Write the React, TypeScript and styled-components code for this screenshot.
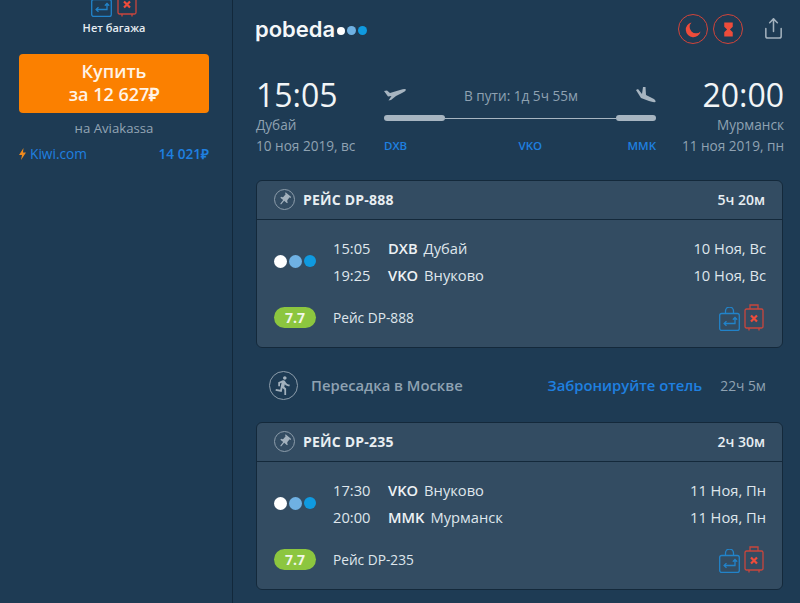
import React from "react";
import styled, { createGlobalStyle } from "styled-components";
import { Share } from "lucide-react";
import { MdDirectionsRun, MdPushPin, MdHourglassFull } from "react-icons/md";

const Global = createGlobalStyle`
  html, body { margin: 0; padding: 0; background: #1e3b54; overflow: hidden; }
  * { box-sizing: border-box; }
  body { font-family: "Open Sans", "Liberation Sans", sans-serif; color: #dfe6ec; }
`;

const Page = styled.div`
  display: flex;
  width: 800px;
  height: 603px;
  overflow: hidden;
  background: #1e3b54;
`;

const Sidebar = styled.aside`
  width: 233px;
  flex: none;
  height: 603px;
  border-right: 1px solid #12283b;
  padding: 0 23px 0 19px;
  display: flex;
  flex-direction: column;
  align-items: stretch;
`;

const BagRow = styled.div<{ $top?: number; $gap?: number; $right?: number }>`
  display: flex;
  align-items: flex-end;
  justify-content: ${(p) => (p.$top !== undefined ? "center" : "flex-end")};
  gap: ${(p) => p.$gap ?? 4}px;
  margin-top: ${(p) => p.$top ?? 0}px;
  margin-right: ${(p) => p.$right ?? 0}px;
`;

const NoBag = styled.div`
  margin-top: 4px;
  text-align: center;
  font-size: 11px;
  line-height: 14px;
  font-weight: 600;
  color: #e6edf2;
`;

const BuyButton = styled.button`
  margin-top: 19px;
  height: 59px;
  width: 190px;
  border: 0;
  border-radius: 4px;
  background: #fb8000;
  color: #fff3e6;
  font-family: inherit;
  font-weight: 600;
  font-size: 18px;
  line-height: 23px;
  padding: 6px 0 0;
  display: flex;
  flex-direction: column;
  align-items: center;
  justify-content: flex-start;
`;

const Seller = styled.div`
  margin-top: 6px;
  text-align: center;
  font-size: 13.2px;
  line-height: 18px;
  color: #93a5b4;
`;

const OfferRow = styled.div`
  margin-top: 8px;
  display: flex;
  justify-content: space-between;
  align-items: center;
  font-size: 13.7px;
  line-height: 18px;
  color: #1f80e0;
`;

const OfferName = styled.span`
  display: flex;
  align-items: center;
  gap: 4px;
`;

const OfferPrice = styled.span`
  font-weight: 600;
  font-size: 13.6px;
`;

const Main = styled.main`
  flex: 1;
  min-width: 0;
  padding: 0 16px 0 23px;
  display: flex;
  flex-direction: column;
`;

const TopBar = styled.header`
  height: 58px;
  display: flex;
  align-items: center;
  justify-content: space-between;
`;

const Logo = styled.div`
  display: flex;
  align-items: center;
  gap: 2px;
  margin-left: -1px;
  font-family: "Inter", sans-serif;
  font-weight: 600;
  font-size: 22px;
  color: #f4f7f9;
`;

const Dot = styled.i<{ $c: string; $s: number }>`
  display: block;
  width: ${(p) => p.$s}px;
  height: ${(p) => p.$s}px;
  border-radius: 50%;
  background: ${(p) => p.$c};
`;

const LogoDots = styled.span`
  display: flex;
  align-items: center;
  gap: 2px;
  margin-top: 3px;
`;

const Actions = styled.div`
  display: flex;
  align-items: center;
  margin-right: -1px;
  gap: 5px;
`;

const AlertBadge = styled.span`
  width: 30px;
  height: 30px;
  border: 1.5px solid #d2443a;
  border-radius: 50%;
  display: flex;
  align-items: center;
  justify-content: center;
  color: #ee4c3b;
`;

const ShareBtn = styled.span`
  margin-left: 14px;
  margin-top: -2px;
  display: flex;
  color: #a3b1bd;
`;

const Summary = styled.section`
  margin-top: 17px;
  height: 105px;
  display: grid;
  grid-template-columns: 128px 1fr 128px;
  flex: none;
`;

const Endpoint = styled.div<{ $right?: boolean }>`
  text-align: ${(p) => (p.$right ? "right" : "left")};
`;

const BigTime = styled.div`
  font-size: 32px;
  line-height: 39px;
  color: #f2f5f7;
`;

const Place = styled.div`
  font-size: 13.6px;
  line-height: 21px;
  color: #8fa2b2;
  white-space: nowrap;
`;

const Route = styled.div`
  display: flex;
  flex-direction: column;
  padding-top: 9px;
`;

const RouteTop = styled.div`
  display: flex;
  justify-content: space-between;
  align-items: center;
  height: 22px;
  font-size: 13.6px;
  color: #8fa2b2;
`;

const Track = styled.div`
  display: flex;
  align-items: center;
  margin-top: 8px;
  height: 8px;
`;

const TrackEnd = styled.span<{ $w: number }>`
  width: ${(p) => p.$w}px;
  height: 6px;
  border-radius: 3px;
  background: #a7b5c1;
`;

const TrackLine = styled.span`
  flex: 1;
  height: 1px;
  background: #a7b5c1;
`;

const Codes = styled.div`
  margin-top: 17px;
  display: flex;
  justify-content: space-between;
  color: #1f80e0;
  font-size: 11.5px;
  line-height: 14px;
  font-weight: 600;
`;

const MidCode = styled.span`
  margin-left: 26px;
`;

const Card = styled.article`
  height: 168px;
  width: 527px;
  background: #334c62;
  border: 1px solid #14293b;
  border-radius: 6px;
  display: flex;
  flex-direction: column;
  flex: none;
`;

const CardHead = styled.div`
  height: 39px;
  flex: none;
  padding: 0 17px 2px;
  border-bottom: 1px solid #14293b;
  display: flex;
  align-items: center;
  justify-content: space-between;
  font-size: 14px;
  font-weight: 600;
  color: #e8eef2;
`;

const CardTitle = styled.div`
  display: flex;
  align-items: center;
  gap: 8px;
  font-size: 14px;
  font-weight: 700;
  letter-spacing: 0.2px;
`;

const RoundIcon = styled.span<{ $s: number }>`
  width: ${(p) => p.$s}px;
  height: ${(p) => p.$s}px;
  border: 1.5px solid #8d9dab;
  border-radius: 50%;
  color: #a3b1bd;
  display: flex;
  align-items: center;
  justify-content: center;
  flex: none;
`;

const CardBody = styled.div`
  flex: 1;
  padding: 14px 16px 0 17px;
`;

const Legs = styled.div`
  display: grid;
  grid-template-columns: 59px 1fr;
  align-items: center;
`;

const Airline = styled.div`
  display: flex;
  align-items: center;
  gap: 2px;
`;

const Rows = styled.div`
  display: flex;
  flex-direction: column;
`;

const Row = styled.div`
  height: 27px;
  display: flex;
  align-items: center;
  font-size: 14.7px;
  color: #dfe6ec;
`;

const Clock = styled.span`
  width: 55px;
`;

const Code = styled.b`
  font-weight: 600;
  margin-right: 6px;
  color: #eef2f5;
`;

const RowDate = styled.span`
  margin-left: auto;
`;

const Bottom = styled.div`
  margin-top: 16px;
  display: grid;
  grid-template-columns: 59px 1fr auto;
  align-items: center;
  font-size: 13.7px;
  color: #dfe6ec;
`;

const Score = styled.span`
  width: 42px;
  height: 21px;
  border-radius: 11px;
  background: #8cc63f;
  display: flex;
  align-items: center;
  justify-content: center;
  color: #f2f7e8;
  font-weight: 700;
  font-size: 14px;
`;

const Transfer = styled.div`
  height: 74px;
  width: 527px;
  flex: none;
  padding: 0 17px 0 13px;
  display: flex;
  align-items: center;
  color: #8fa2b2;
  font-size: 14.8px;
`;

const TransferText = styled.span`
  margin-left: 13px;
  font-weight: 600;
`;

const Hotel = styled.span`
  margin-left: auto;
  color: #1f80e0;
  font-weight: 600;
`;

const Wait = styled.span`
  margin-left: 18px;
  font-size: 13.8px;
`;

const Hand = () => (
  <svg width="21" height="24" viewBox="0 0 21 24" fill="none" stroke="#2283c9" strokeWidth="1.3">
    <rect x="0.7" y="6.5" width="19.6" height="17" rx="2" />
    <path d="M6.5 6.5V4a4 4 0 0 1 8 0v2.5" />
    <path d="M16 12v4.5H5.5" />
    <path d="M7.5 14.2 5.1 16.5 7.5 18.8" />
    <path d="M13.8 12.6 16 10.4l2.2 2.2" fill="#2283c9" />
  </svg>
);

const Suitcase = () => (
  <svg width="20" height="27" viewBox="0 0 20 27" fill="none" stroke="#c9463c" strokeWidth="1.3">
    <path d="M6 5V1h8v4" />
    <rect x="1" y="5" width="18" height="19" rx="1.5" />
    <path d="M5 24v2.5M15 24v2.5" />
    <path d="M7 11.5l6 6M13 11.5l-6 6" stroke="#ee4c3b" strokeWidth="2.2" />
  </svg>
);

const Takeoff = () => (
  <svg width="22" height="14" viewBox="0 0 22 14" fill="#a7b5c1">
    <path d="M0 3 3 2.5 6 5 16 2Q21 .5 22 1.5 22 3 18 5L12 8 7 12 4.5 12.5 7.5 8 4 8.5Z" />
  </svg>
);

const Landing = () => (
  <svg width="20" height="17" viewBox="0 0 20 17" fill="#a7b5c1">
    <path d="M0 3 2 2 6 7 7 0 9.5 0 10 8 17 11.5Q20 13 19.5 15 17 15.5 13 14L5 11Z" />
  </svg>
);

const Moon = () => (
  <svg width="19" height="19" viewBox="0 0 24 24" fill="currentColor">
    <path d="M9.5 3A9.5 9.5 0 1 0 21 14.5 8 8 0 0 1 9.5 3Z" />
  </svg>
);

const Pobeda = () => (
  <Airline>
    <Dot $c="#ffffff" $s={13} />
    <Dot $c="#6fb1e3" $s={13} />
    <Dot $c="#0f9ae0" $s={12} />
  </Airline>
);

type Leg = { time: string; code: string; city: string; date: string };

const FlightCard = ({ no, dur, legs }: { no: string; dur: string; legs: Leg[] }) => (
  <Card>
    <CardHead>
      <CardTitle>
        <RoundIcon $s={21}>
          <MdPushPin size={15} style={{ transform: "rotate(40deg)" }} />
        </RoundIcon>
        РЕЙС {no}
      </CardTitle>
      <span>{dur}</span>
    </CardHead>
    <CardBody>
      <Legs>
        <Pobeda />
        <Rows>
          {legs.map((l) => (
            <Row key={l.time}>
              <Clock>{l.time}</Clock>
              <Code>{l.code}</Code>
              {l.city}
              <RowDate>{l.date}</RowDate>
            </Row>
          ))}
        </Rows>
      </Legs>
      <Bottom>
        <Score>7.7</Score>
        <span>Рейс {no}</span>
        <BagRow $right={2}>
          <Hand />
          <Suitcase />
        </BagRow>
      </Bottom>
    </CardBody>
  </Card>
);

export default function App() {
  return (
    <Page>
      <Global />
      <Sidebar>
        <BagRow $top={-10} $gap={5}>
          <Hand />
          <Suitcase />
        </BagRow>
        <NoBag>Нет багажа</NoBag>
        <BuyButton>
          <span>Купить</span>
          <span>за 12 627₽</span>
        </BuyButton>
        <Seller>на Aviakassa</Seller>
        <OfferRow>
          <OfferName>
            <svg width="7" height="12" viewBox="0 0 7 12"><path d="M4.5 0 0 7h3l-1 5 5-7.5H4z" fill="#f08a1d" /></svg>
            Kiwi.com
          </OfferName>
          <OfferPrice>14 021₽</OfferPrice>
        </OfferRow>
      </Sidebar>
      <Main>
        <TopBar>
          <Logo>
            pobeda
            <LogoDots>
              <Dot $c="#ffffff" $s={8} />
              <Dot $c="#6fb1e3" $s={9} />
              <Dot $c="#0f9ae0" $s={9} />
            </LogoDots>
          </Logo>
          <Actions>
            <AlertBadge><Moon /></AlertBadge>
            <AlertBadge><MdHourglassFull size={17} /></AlertBadge>
            <ShareBtn><Share size={23} strokeWidth={1.6} /></ShareBtn>
          </Actions>
        </TopBar>
        <Summary>
          <Endpoint>
            <BigTime>15:05</BigTime>
            <Place>Дубай</Place>
            <Place>10 ноя 2019, вс</Place>
          </Endpoint>
          <Route>
            <RouteTop>
              <Takeoff />
              <span>В пути: 1д 5ч 55м</span>
              <Landing />
            </RouteTop>
            <Track>
              <TrackEnd $w={61} />
              <TrackLine />
              <TrackEnd $w={40} />
            </Track>
            <Codes>
              <span>DXB</span>
              <MidCode>VKO</MidCode>
              <span>MMK</span>
            </Codes>
          </Route>
          <Endpoint $right>
            <BigTime>20:00</BigTime>
            <Place>Мурманск</Place>
            <Place>11 ноя 2019, пн</Place>
          </Endpoint>
        </Summary>
        <FlightCard
          no="DP-888"
          dur="5ч 20м"
          legs={[
            { time: "15:05", code: "DXB", city: "Дубай", date: "10 Ноя, Вс" },
            { time: "19:25", code: "VKO", city: "Внуково", date: "10 Ноя, Вс" },
          ]}
        />
        <Transfer>
          <RoundIcon $s={29}><MdDirectionsRun size={21} /></RoundIcon>
          <TransferText>Пересадка в Москве</TransferText>
          <Hotel>Забронируйте отель</Hotel>
          <Wait>22ч 5м</Wait>
        </Transfer>
        <FlightCard
          no="DP-235"
          dur="2ч 30м"
          legs={[
            { time: "17:30", code: "VKO", city: "Внуково", date: "11 Ноя, Пн" },
            { time: "20:00", code: "MMK", city: "Мурманск", date: "11 Ноя, Пн" },
          ]}
        />
      </Main>
    </Page>
  );
}
